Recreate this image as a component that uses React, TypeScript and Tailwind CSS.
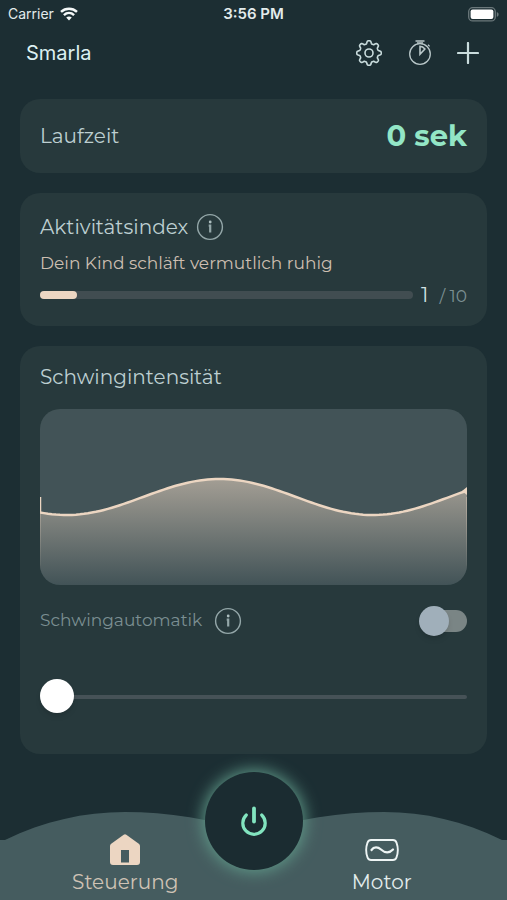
import { useState } from "react";
import type { ReactNode } from "react";

const CHART_WIDTH = 428;
const CHART_HEIGHT = 176;
const MIDLINE = 88;
const AMPLITUDE = 18;
const PERIOD = 307;
const CREST = 180;

function wavePoints() {
  const points: string[] = [];
  for (let x = 0; x <= CHART_WIDTH; x += 4) {
    const y = MIDLINE - AMPLITUDE * Math.cos(((x - CREST) / PERIOD) * 2 * Math.PI);
    points.push(`${x} ${y.toFixed(2)}`);
  }
  return points;
}

/* Outline of a cog with eight rounded teeth, centred in a 28-unit box. */
function gearPoints() {
  const points: string[] = [];
  for (let step = 0; step < 160; step++) {
    const angle = (step / 160) * 2 * Math.PI;
    const wave = Math.cos(8 * angle);
    const radius = 10.8 + 1.5 * Math.tanh(1.9 * wave);
    points.push(`${(14 + radius * Math.sin(angle)).toFixed(2)},${(14 - radius * Math.cos(angle)).toFixed(2)}`);
  }
  return points.join(" ");
}

function WifiIcon() {
  return (
    <svg viewBox="0 0 18 14" className="h-[14px] w-[18px]" fill="none" stroke="#f4f8f8" strokeWidth="2.5" aria-hidden="true">
      <path d="M1 4.8C5.6.6 12.4.6 17 4.8" />
      <path d="M3.9 8.1c3-2.7 7.2-2.7 10.2 0" />
      <path d="M6.2 10.5 9 13.6l2.8-3.1c-1.6-1.4-4-1.4-5.6 0Z" fill="#f4f8f8" stroke="none" />
    </svg>
  );
}

function BatteryIcon() {
  return (
    <svg viewBox="0 0 31 15" className="h-[15px] w-[31px]" aria-hidden="true">
      <rect x=".7" y=".7" width="26.6" height="13.2" rx="4" fill="none" stroke="#6b787b" strokeWidth="1.3" />
      <rect x="2.6" y="2.6" width="22.8" height="9.4" rx="2" fill="#fff" />
      <path d="M28.8 5v4.8c1.1-.4 1.8-1.3 1.8-2.4S29.9 5.4 28.8 5Z" fill="#6b787b" />
    </svg>
  );
}

function GearIcon() {
  return (
    <svg viewBox="0 0 28 28" className="size-7" fill="none" stroke="#c9dcdd" strokeWidth="1.6" strokeLinejoin="round" aria-hidden="true">
      <polygon points={gearPoints()} />
      <circle cx="14" cy="14" r="4" />
    </svg>
  );
}

function StopwatchIcon() {
  return (
    <svg viewBox="0 0 24 26" className="h-[26px] w-6" fill="none" stroke="#b9c7c9" strokeWidth="1.3" aria-hidden="true">
      <circle cx="12" cy="14" r="10.3" />
      <path d="M7.500 1h9" strokeWidth="1.500" />
      <path d="M9 3h6M20 4.800l1.600 1.600" />
      <path d="M12 6.300v7.900l4.900-5.200C15.600 7.400 14 6.400 12 6.300Z" strokeWidth="1.600" />
    </svg>
  );
}

function PlusIcon() {
  return (
    <svg viewBox="0 0 22 22" className="size-[22px]" stroke="#c9dcdd" strokeWidth="2.2" strokeLinecap="round" aria-hidden="true">
      <path d="M11 1v20M1 11h20" />
    </svg>
  );
}

function InfoButton({ label }: { label: string }) {
  return (
    <button type="button" aria-label={label} className="block size-7">
      <svg viewBox="0 0 28 28" className="size-7" fill="none" stroke="#94a7a9" strokeWidth="1.4" aria-hidden="true">
        <circle cx="14" cy="14" r="12.4" />
        <path d="M12.700 12.700h1.500v6.800" strokeWidth="2.200" />
        <circle cx="14.2" cy="9" r="1.4" fill="#aebfc0" stroke="none" />
      </svg>
    </button>
  );
}

function HouseIcon() {
  return (
    <svg viewBox="0 0 30 31" className="h-[31px] w-[30px]" fill="#ecd6c2" aria-hidden="true">
      <path fillRule="evenodd" d="M13.700.7a2 2 0 0 1 2.600 0l12.500 9c.8.600 1.200 1.300 1.200 2.200V28a3 3 0 0 1-3 3H3a3 3 0 0 1-3-3V11.900c0-.9.400-1.600 1.200-2.200ZM11 16v12.500h8V16Z" />
    </svg>
  );
}

function MotorIcon() {
  return (
    <svg viewBox="0 0 34 22" className="h-[22px] w-[34px]" fill="none" stroke="#eef5f5" strokeWidth="1.9" strokeLinecap="round" aria-hidden="true">
      <path d="M6 1h22c1.800 0 2.800.8 3.500 2.600 1.800 5 1.800 9.800 0 14.800-.7 1.800-1.700 2.600-3.500 2.600H6c-1.800 0-2.800-.8-3.500-2.600-1.800-5-1.800-9.800 0-14.800C3.200 1.800 4.200 1 6 1Z" />
      <path d="M6.500 11c2.500-3.600 6.500-3 9.500-.500 4 3.700 8.500 3.800 12 0" strokeWidth="2.200" />
    </svg>
  );
}

function PowerIcon() {
  return (
    <svg viewBox="0 0 28 32" className="h-8 w-7" fill="none" stroke="#82e4bf" strokeWidth="3.2" strokeLinecap="round" aria-hidden="true">
      <path d="M14 3.500v13" strokeWidth="3.800" />
      <path d="M6.300 10a11.200 11.200 0 1 0 15.400 0" />
    </svg>
  );
}

function IntensityChart() {
  const points = wavePoints();
  const area = `M0 ${CHART_HEIGHT} L${points.join(" L")} L${CHART_WIDTH} ${CHART_HEIGHT} Z`;
  const line = `M0 ${MIDLINE} L${points.join(" L")}`;
  return (
    <svg
      viewBox={`0 0 ${CHART_WIDTH} ${CHART_HEIGHT}`}
      preserveAspectRatio="none"
      role="img"
      aria-label="Schwingintensität"
      className="block h-44 w-full rounded-[20px] bg-[#425357]"
    >
      <defs>
        <linearGradient id="wave-fill" x1="0" y1="0" x2="0" y2="1">
          <stop offset="0" stopColor="#ecd6c2" stopOpacity=".57" />
          <stop offset="1" stopColor="#ecd6c2" stopOpacity="0" />
        </linearGradient>
        <linearGradient id="edge-fade" x1="0" y1="0" x2="0" y2="1">
          <stop offset="0" stopColor="#ecd6c2" stopOpacity=".4" />
          <stop offset="1" stopColor="#ecd6c2" stopOpacity="0" />
        </linearGradient>
      </defs>
      <path d={area} fill="url(#wave-fill)" />
      <rect x="0" y={MIDLINE} width="1" height="80" fill="url(#edge-fade)" />
      <rect x={CHART_WIDTH - 1} y={MIDLINE} width="1" height="80" fill="url(#edge-fade)" />
      <path d={line} fill="none" stroke="#ecd6c2" strokeWidth="2.5" />
      <path d="M423 82l5-4v8Z" fill="#ecd6c2" />
    </svg>
  );
}

function Card({ className, children }: { className: string; children: ReactNode }) {
  return <section className={`rounded-[20px] bg-[#27393c] px-5 ${className}`}>{children}</section>;
}

export default function App() {
  const [auto, setAuto] = useState(false);
  const [intensity, setIntensity] = useState(0);
  const [running, setRunning] = useState(false);

  return (
    <div className="flex min-h-screen flex-col bg-[#1c2e33] font-['Montserrat','Inter','Liberation_Sans',sans-serif] text-[#bdcfd1]">
      <div className="grid h-7 grid-cols-3 items-center px-2 font-['Inter','Liberation_Sans',sans-serif] text-sm text-[#e3ebec]">
        <div className="flex items-center gap-1.5">
          <span>Carrier</span>
          <WifiIcon />
        </div>
        <span className="text-center text-[15px] font-semibold">3:56 PM</span>
        <div className="flex justify-end">
          <BatteryIcon />
        </div>
      </div>

      <header className="flex h-[49px] items-center justify-between pr-7 pl-[26px]">
        <h1 className="font-['Inter','Liberation_Sans',sans-serif] text-xl text-[#dcf0f2]">Smarla</h1>
        <div className="flex items-center gap-[25px]">
          <button type="button" aria-label="Einstellungen"><GearIcon /></button>
          <button type="button" aria-label="Timer"><StopwatchIcon /></button>
          <button type="button" aria-label="Hinzufügen"><PlusIcon /></button>
        </div>
      </header>

      <main className="flex flex-col gap-5 px-5 pt-[22px]">
        <Card className="flex h-[74px] items-center justify-between">
          <h2 className="text-[20px] leading-7">Laufzeit</h2>
          <span className="text-[29px] font-bold text-[#93e6c6]">0 sek</span>
        </Card>

        <Card className="pt-5 pb-[17px]">
          <div className="flex items-center gap-2">
            <h2 className="text-[20px] leading-7">Aktivitätsindex</h2>
            <InfoButton label="Info zum Aktivitätsindex" />
          </div>
          <p className="mt-2 text-[17px] leading-7 text-[#cdbfb1]">Dein Kind schläft vermutlich ruhig</p>
          <div className="mt-1 flex h-7 items-center">
            <div
              role="progressbar"
              aria-label="Aktivitätsindex"
              aria-valuemin={0}
              aria-valuemax={10}
              aria-valuenow={1}
              className="h-2 flex-1 rounded-sm bg-[#414d51]"
            >
              <div className="h-2 w-1/10 rounded-sm bg-[#ecd6c2]" />
            </div>
            <div className="flex w-[54px] items-baseline justify-between pl-2">
              <span className="text-[20px] text-[#d3e2e3]">1</span>
              <span className="text-[17px] text-[#7b8f92]">/ 10</span>
            </div>
          </div>
        </Card>

        <Card className="pt-[17px] pb-10">
          <h2 className="text-[20px] leading-7">Schwingintensität</h2>
          <div className="mt-[18px]">
            <IntensityChart />
          </div>
          <div className="mt-[21px] flex h-[30px] items-center justify-between">
            <div className="flex items-center gap-3">
              <label htmlFor="auto" className="text-[17px] text-[#7b8f92]">Schwingautomatik</label>
              <InfoButton label="Info zur Schwingautomatik" />
            </div>
            <input
              id="auto"
              type="checkbox"
              role="switch"
              checked={auto}
              onChange={(event) => setAuto(event.target.checked)}
              className="relative h-[22px] w-11 appearance-none rounded-full bg-[#7a8585] before:absolute before:-top-1 before:-left-1 before:size-[30px] before:rounded-full before:bg-[#a0afba] before:shadow-md before:content-[''] checked:before:left-5"
            />
          </div>
          <input
            type="range"
            aria-label="Schwingintensität"
            min={0}
            max={100}
            value={intensity}
            onChange={(event) => setIntensity(Number(event.target.value))}
            className="mt-11 block h-[34px] w-full appearance-none bg-transparent [&::-webkit-slider-runnable-track]:h-1 [&::-webkit-slider-runnable-track]:rounded-full [&::-webkit-slider-runnable-track]:bg-[#465257] [&::-webkit-slider-thumb]:-mt-4 [&::-webkit-slider-thumb]:size-[34px] [&::-webkit-slider-thumb]:appearance-none [&::-webkit-slider-thumb]:rounded-full [&::-webkit-slider-thumb]:bg-white [&::-webkit-slider-thumb]:shadow-md"
          />
        </Card>
      </main>

      <nav className="relative mt-auto flex h-32 items-end">
        <svg viewBox="0 0 507 88" preserveAspectRatio="none" className="absolute inset-x-0 bottom-0 h-[88px] w-full" fill="#455c5f" aria-hidden="true">
          <path d="M0 28h5C44 9 84 0 125 0c42 0 88 7 128.500 21C294 7 342 0 384 0c41 0 79 9 118 28h5v60H0Z" />
        </svg>
        <a href="#steuerung" aria-current="page" className="relative flex flex-1 flex-col items-center gap-[3px] pb-1 text-[20px] leading-7 text-[#cfc3b5]">
          <HouseIcon />
          Steuerung
        </a>
        <button
          type="button"
          aria-label="Ein/Aus"
          aria-pressed={running}
          onClick={() => setRunning(!running)}
          className="relative z-10 -mx-[46px] mb-[30px] flex size-[98px] items-center justify-center rounded-full bg-[#1b2c31] shadow-[0_0_16px_2px_#609a89]"
        >
          <PowerIcon />
        </button>
        <a href="#motor" className="relative flex flex-1 flex-col items-center gap-[3px] pb-1 text-[20px] leading-7 text-[#e3eded]">
          <span className="flex h-[31px] items-center"><MotorIcon /></span>
          Motor
        </a>
      </nav>
    </div>
  );
}
